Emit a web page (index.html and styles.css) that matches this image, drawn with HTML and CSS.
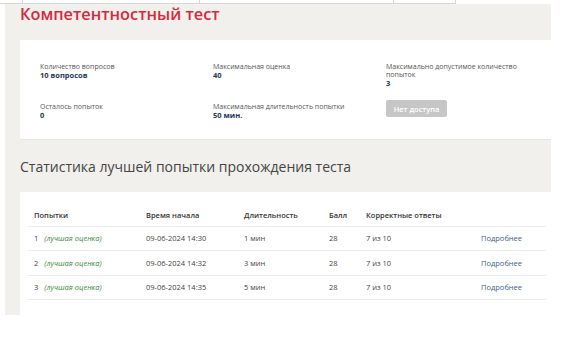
FILE: index.html
```html
<!DOCTYPE html>
<html lang="ru">
<head>
<meta charset="utf-8">
<link rel="stylesheet" href="styles.css">
</head>
<body>
<div class="tabs">
  <div class="tab t1"></div>
  <div class="tab t2"></div>
  <div class="tab t3"></div>
  <div class="tab t4"></div>
</div>
<main class="panel">
  <h1 class="title">Компетентностный тест</h1>
  <section class="card info">
    <div class="cell">
      <div class="label">Количество вопросов</div>
      <div class="value">10 вопросов</div>
    </div>
    <div class="cell">
      <div class="label">Максимальная оценка</div>
      <div class="value">40</div>
    </div>
    <div class="cell">
      <div class="label">Максимально допустимое количество<br>попыток</div>
      <div class="value">3</div>
    </div>
    <div class="cell">
      <div class="label">Осталось попыток</div>
      <div class="value">0</div>
    </div>
    <div class="cell">
      <div class="label">Максимальная длительность попытки</div>
      <div class="value">50 мин.</div>
    </div>
    <div class="cell">
      <button class="btn" disabled>Нет доступа</button>
    </div>
  </section>
  <h2 class="subtitle">Статистика лучшей попытки прохождения теста</h2>
  <section class="card stats">
    <table class="table">
      <thead>
        <tr>
          <th class="c1">Попытки</th>
          <th class="c2">Время начала</th>
          <th class="c3">Длительность</th>
          <th class="c4">Балл</th>
          <th class="c5">Корректные ответы</th>
          <th class="c6"></th>
        </tr>
      </thead>
      <tbody>
        <tr>
          <td>1 <span class="best">(лучшая оценка)</span></td>
          <td>09-06-2024 14:30</td>
          <td>1 мин</td>
          <td>28</td>
          <td>7 из 10</td>
          <td><a class="more" href="#">Подробнее</a></td>
        </tr>
        <tr>
          <td>2 <span class="best">(лучшая оценка)</span></td>
          <td>09-06-2024 14:32</td>
          <td>3 мин</td>
          <td>28</td>
          <td>7 из 10</td>
          <td><a class="more" href="#">Подробнее</a></td>
        </tr>
        <tr>
          <td>3 <span class="best">(лучшая оценка)</span></td>
          <td>09-06-2024 14:35</td>
          <td>5 мин</td>
          <td>28</td>
          <td>7 из 10</td>
          <td><a class="more" href="#">Подробнее</a></td>
        </tr>
      </tbody>
    </table>
  </section>
</main>
</body>
</html>
```
FILE: styles.css
```css
* { box-sizing: border-box; }
html, body { margin: 0; padding: 0; background: #fff; }
body {
  font-family: "Open Sans", "Noto Sans", sans-serif;
  color: #444;
  width: 568px;
}
.tabs {
  display: flex;
  height: 4px;
}
.tab {
  height: 4px;
  border-bottom: 1px solid #d6d6d2;
}
.t1 { width: 22px; }
.t2 { width: 177px; border-left: 1px solid #d6d6d2; }
.t3 { width: 194px; border-left: 1px solid #d6d6d2; }
.t4 { width: 63px; border-left: 1px solid #d6d6d2; border-right: 1px solid #d6d6d2; }

.panel {
  margin-left: 5px;
  width: 546px;
  background: #f1f0ec;
  padding: 0 0 0 15px;
  display: flex;
  flex-direction: column;
}
.title {
  margin: 0;
  font-size: 16.3px;
  line-height: 18px;
  font-weight: 600;
  color: #d42a3c;
  padding-top: 1px;
  height: 18px;
}
.card {
  background: #fff;
  box-shadow: 0 1px 0 #e6e5e1;
}
.info {
  margin-top: 18px;
  height: 99px;
  padding: 23px 0 0 20px;
  display: grid;
  grid-template-columns: 173px 173px 173px;
  grid-template-rows: 40px auto;
  align-content: start;
}
.label {
  font-size: 7px;
  line-height: 8px;
  color: #555;
}
.value {
  font-size: 7.5px;
  line-height: 9px;
  font-weight: 700;
  color: #1e3556;
}
.btn {
  display: block;
  font-family: inherit;
  font-size: 7.5px;
  font-weight: 600;
  color: #fff;
  background: #c6c6c6;
  border: none;
  border-radius: 2px;
  width: 61px;
  height: 17px;
  padding: 0;
  margin-top: -3px;
}
.subtitle {
  margin: 0;
  padding: 18px 0 0 0;
  height: 53px;
  font-size: 14px;
  line-height: 20px;
  font-weight: 400;
  color: #444;
}
.stats {
  height: 123px;
  padding: 13px 5px 0 8px;
}
.table {
  width: 518px;
  border-collapse: collapse;
  font-size: 7.5px;
  color: #444;
}
.table th {
  text-align: left;
  font-weight: 600;
  color: #333;
  height: 21px;
  padding: 0 6px;
  border-bottom: 1px solid #ebebeb;
}
.table td {
  height: 24.5px;
  padding: 0 6px;
  border-bottom: 1px solid #ebebeb;
}
.c1 { width: 112px; }
.c2 { width: 98px; }
.c3 { width: 85px; }
.c4 { width: 37px; }
.c5 { width: 115px; }
.best {
  font-style: italic;
  color: #3d8a3d;
  margin-left: 4px;
}
.more {
  color: #3d5f8a;
  text-decoration: none;
}
```
